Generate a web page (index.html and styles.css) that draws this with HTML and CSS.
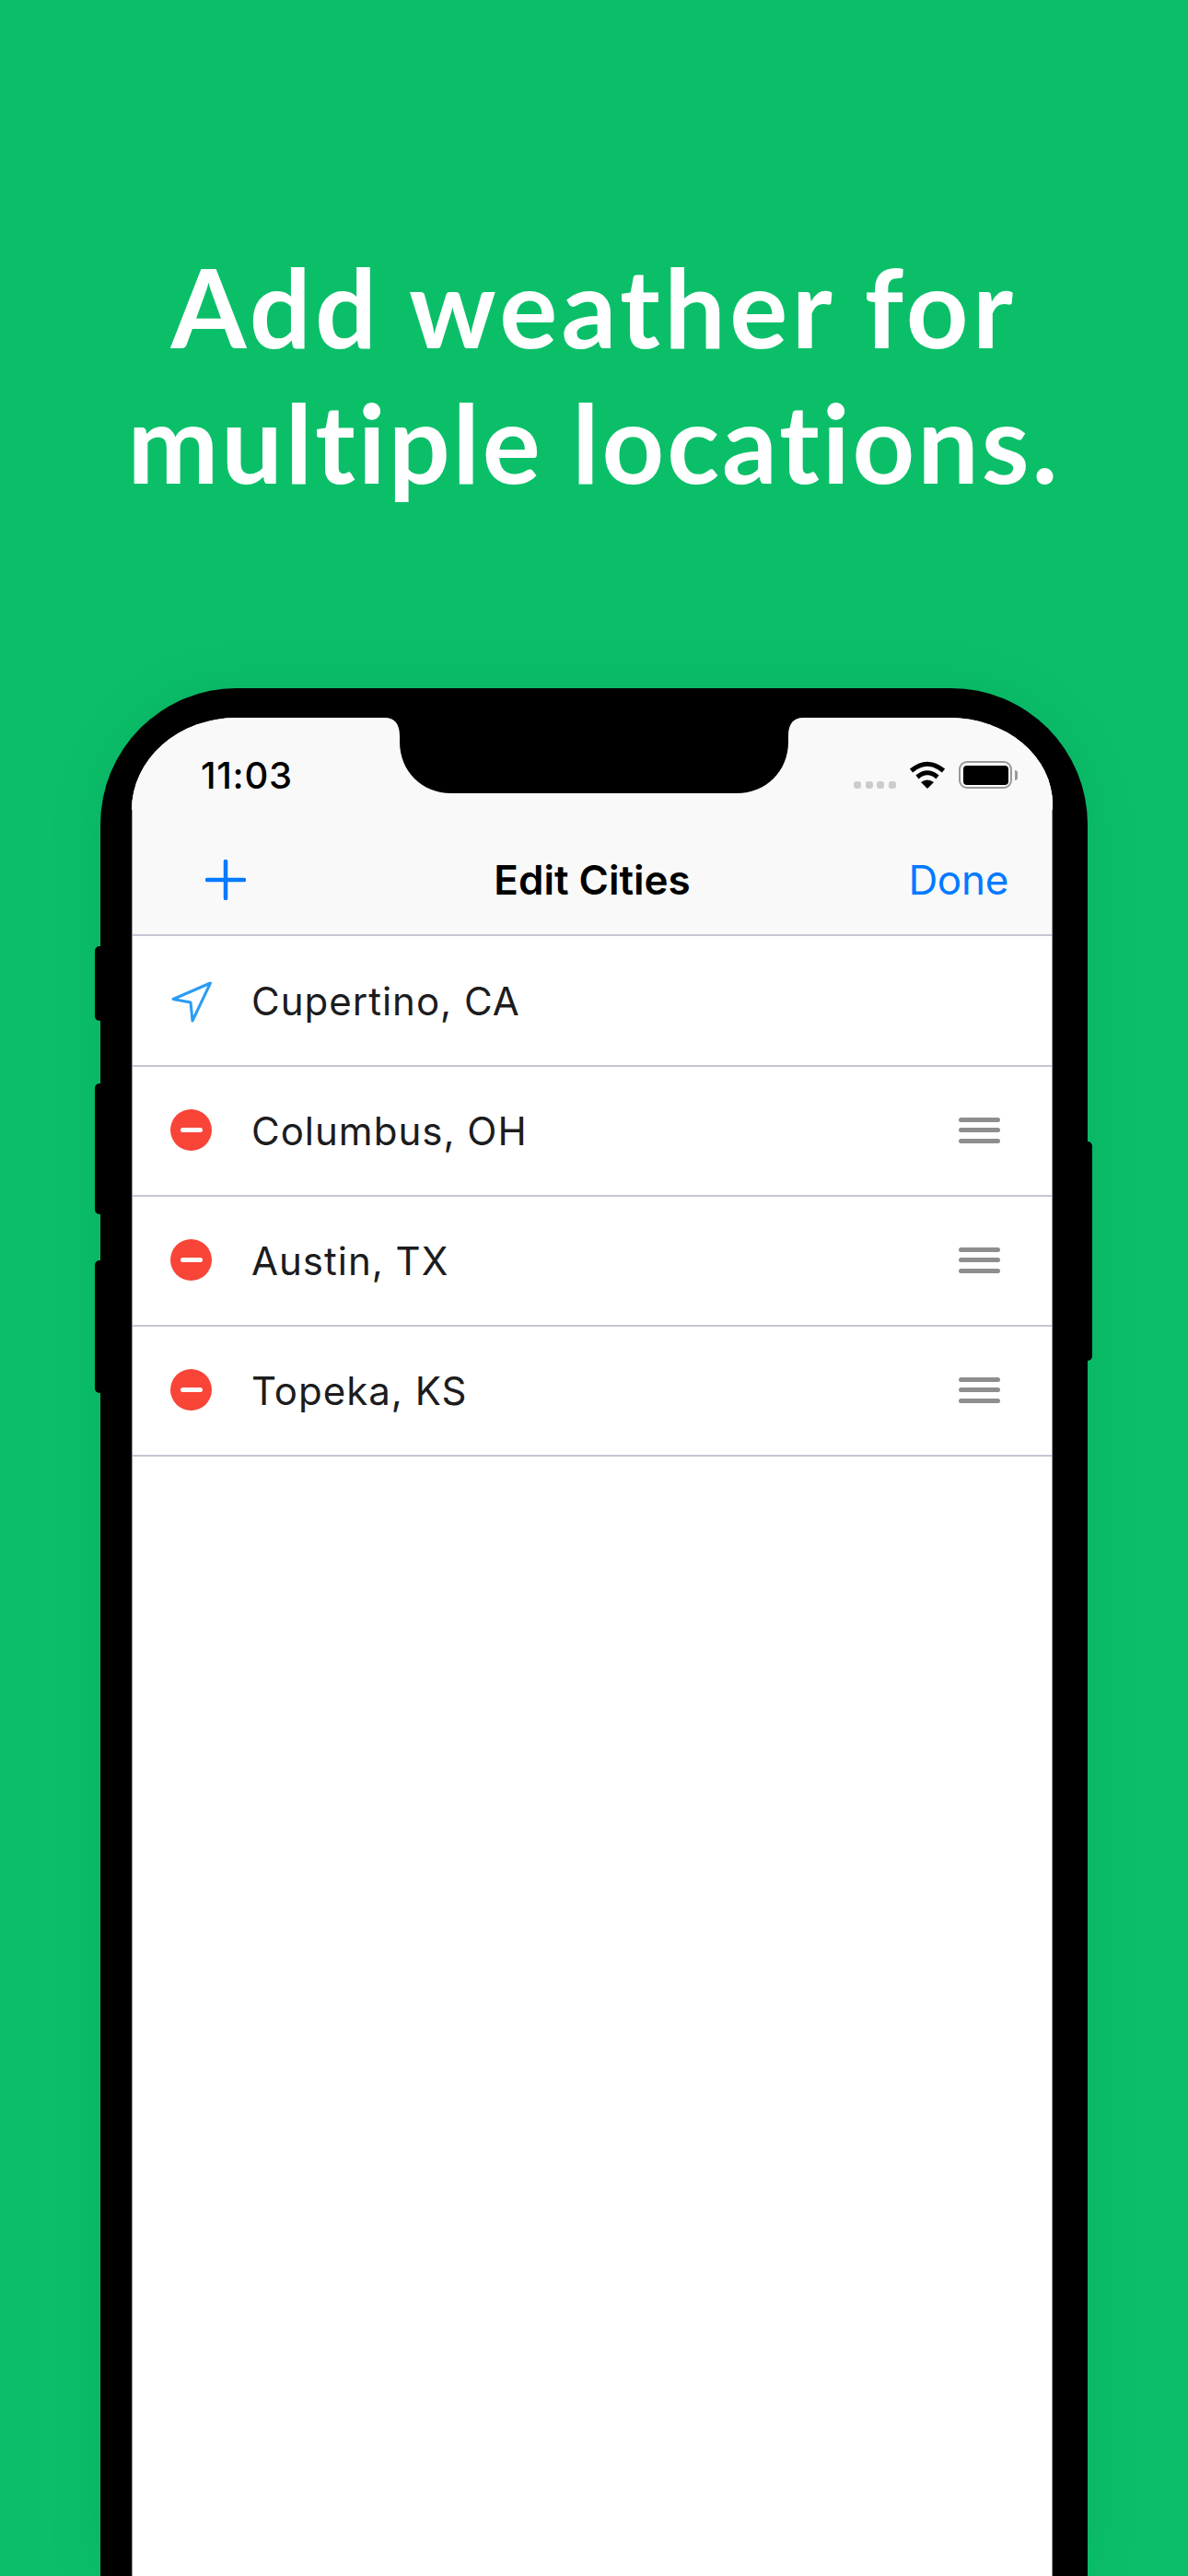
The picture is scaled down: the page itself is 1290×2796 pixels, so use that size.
FILE: index.html
```html
<!DOCTYPE html>
<html lang="en">
<head>
<meta charset="utf-8">
<title>Edit Cities</title>
<link rel="stylesheet" href="styles.css">
</head>
<body>
<h1 class="headline"><span class="line-one">Add weather for</span><span class="line-two">multiple locations.</span></h1>
<div class="phone">
  <span class="side side-mute"></span>
  <span class="side side-up"></span>
  <span class="side side-down"></span>
  <span class="side side-power"></span>
  <div class="screen">
    <svg class="notch" width="454" height="82" viewBox="0 0 454 82"><path d="M0 0C10 0 16 6 16 20V26C16 58 40 82 72 82H382C414 82 438 58 438 26V20C438 6 444 0 454 0Z" fill="#000"/></svg>
    <header class="bar">
      <div class="status">
        <span class="time">11:03</span>
        <div class="status-icons">
          <div class="dots"><i></i><i></i><i></i><i></i></div>
          <svg class="wifi" width="40" height="30" viewBox="0 0 40 30"><path d="M2.5 10.5Q20 -4 37.500 10.500" fill="none" stroke="#000" stroke-width="5"/><path d="M9 17.500Q20 8 31 17.500" fill="none" stroke="#000" stroke-width="5"/><path d="M20 30L13 23Q20 18 27 23Z" fill="#000"/></svg>
          <div class="battery"><span class="battery-fill"></span></div>
          <span class="battery-nub"></span>
        </div>
      </div>
      <nav class="nav">
        <svg class="plus" width="44" height="44" viewBox="0 0 44 44"><path d="M22 2V42M2 22H42" fill="none" stroke="#007aff" stroke-width="4.500" stroke-linecap="round"/></svg>
        <span class="nav-title">Edit Cities</span>
        <span class="nav-done">Done</span>
      </nav>
    </header>
    <ul class="cities">
      <li class="city">
        <svg class="city-icon" width="46" height="46" viewBox="0 0 46 46"><path d="M43.500 3L3 20.500L22 24L24 44Z" fill="none" stroke="#2a9df4" stroke-width="3" stroke-linejoin="round"/></svg>
        <span class="city-name">Cupertino, CA</span>
      </li>
      <li class="city">
        <span class="city-icon remove"><i></i></span>
        <span class="city-name">Columbus, OH</span>
        <span class="grip"><i></i><i></i><i></i></span>
      </li>
      <li class="city">
        <span class="city-icon remove"><i></i></span>
        <span class="city-name">Austin, TX</span>
        <span class="grip"><i></i><i></i><i></i></span>
      </li>
      <li class="city">
        <span class="city-icon remove"><i></i></span>
        <span class="city-name">Topeka, KS</span>
        <span class="grip"><i></i><i></i><i></i></span>
      </li>
    </ul>
  </div>
</div>
</body>
</html>
```

FILE: styles.css
```css
* { box-sizing: border-box; }
html, body { margin: 0; padding: 0; }
body {
  width: 1290px;
  height: 2796px;
  overflow: hidden;
  background: #0bbf69;
  font-family: Inter, "Liberation Sans", sans-serif;
}
.headline {
  margin: 0;
  height: 747px;
  padding-top: 259px;
  text-align: center;
  color: #fff;
  font-family: Lato, "Noto Sans", sans-serif;
  font-size: 118px;
  line-height: 147px;
  font-weight: 700;
  font-variant-ligatures: none;
}
.line-one { display: block; letter-spacing: 4.400px; }
.line-two { display: block; letter-spacing: 2.900px; }
.phone {
  position: relative;
  width: 1072px;
  height: 2049px;
  margin-left: 109px;
  padding: 32px 38px 0 34px;
  background: #000;
  border-radius: 148px 148px 0 0;
  box-shadow: 0 0 70px rgba(0, 0, 0, .07);
}
.side { position: absolute; background: #000; }
.side-mute { left: -6px; top: 280px; width: 6px; height: 81px; border-radius: 5px 0 0 5px; }
.side-up { left: -6px; top: 429px; width: 6px; height: 142px; border-radius: 5px 0 0 5px; }
.side-down { left: -6px; top: 621px; width: 6px; height: 144px; border-radius: 5px 0 0 5px; }
.side-power { right: -5px; top: 492px; width: 5px; height: 238px; border-radius: 0 5px 5px 0; }
.screen {
  position: relative;
  width: 1000px;
  height: 2017px;
  background: #fff;
  border-radius: 114px 112px 0 0 / 100px 94px 0 0;
  overflow: hidden;
}
.screen::after {
  content: "";
  position: absolute;
  top: 100px;
  right: 0;
  bottom: 0;
  left: 0;
  border-left: 1px solid #999;
  border-right: 1px solid #999;
}
.notch { position: absolute; top: 0; left: 275px; }
.bar { background: #f9f9f9; border-bottom: 2px solid #c8c4d4; }
.status {
  display: flex;
  align-items: center;
  justify-content: space-between;
  height: 124px;
  padding: 0 38px 0 75px;
}
.time { font-size: 40px; font-weight: 500; color: #000; letter-spacing: .7px; }
.status-icons { display: flex; align-items: center; }
.dots { display: flex; gap: 4.600px; margin: 22px 14px 0 0; }
.dots i { width: 8px; height: 8px; border-radius: 3px; background: #ccc; }
.wifi { margin-right: 14px; }
.battery {
  width: 58px;
  height: 30px;
  padding: 2.500px;
  border: 2.500px solid #999;
  border-radius: 9px;
}
.battery-fill { display: block; width: 100%; height: 100%; background: #000; border-radius: 4px; }
.battery-nub { width: 3px; height: 11px; margin-left: 3px; background: #999; border-radius: 0 3px 3px 0; }
.nav {
  display: grid;
  grid-template-columns: 1fr auto 1fr;
  align-items: center;
  height: 111px;
  padding: 0 48px 7px;
  font-size: 44px;
}
.plus { margin-left: 32px; }
.nav-title { font-weight: 600; color: #000; }
.nav-done { justify-self: end; color: #007aff; letter-spacing: -.3px; }
.cities { margin: 0; padding: 1px 0 0; list-style: none; }
.city {
  display: flex;
  align-items: center;
  height: 141px;
  padding: 0 57px 0 42px;
  border-bottom: 2px solid #c8c4d4;
}
.city-icon { flex: none; width: 46px; height: 46px; margin-right: 42px; }
.remove {
  display: flex;
  align-items: center;
  justify-content: center;
  width: 45px;
  height: 45px;
  margin-top: -3px;
  margin-right: 43px;
  background: #f94438;
  border-radius: 50%;
}
.remove i { width: 24px; height: 5px; background: #fff; border-radius: 3px; }
.city-name { flex: 1; font-size: 42px; color: #1c1c1e; letter-spacing: 1px; }
.grip { display: flex; flex-direction: column; gap: 6.500px; width: 45px; margin-top: -2px; }
.grip i { height: 5px; background: #8e8e8e; border-radius: 3px; }
```
